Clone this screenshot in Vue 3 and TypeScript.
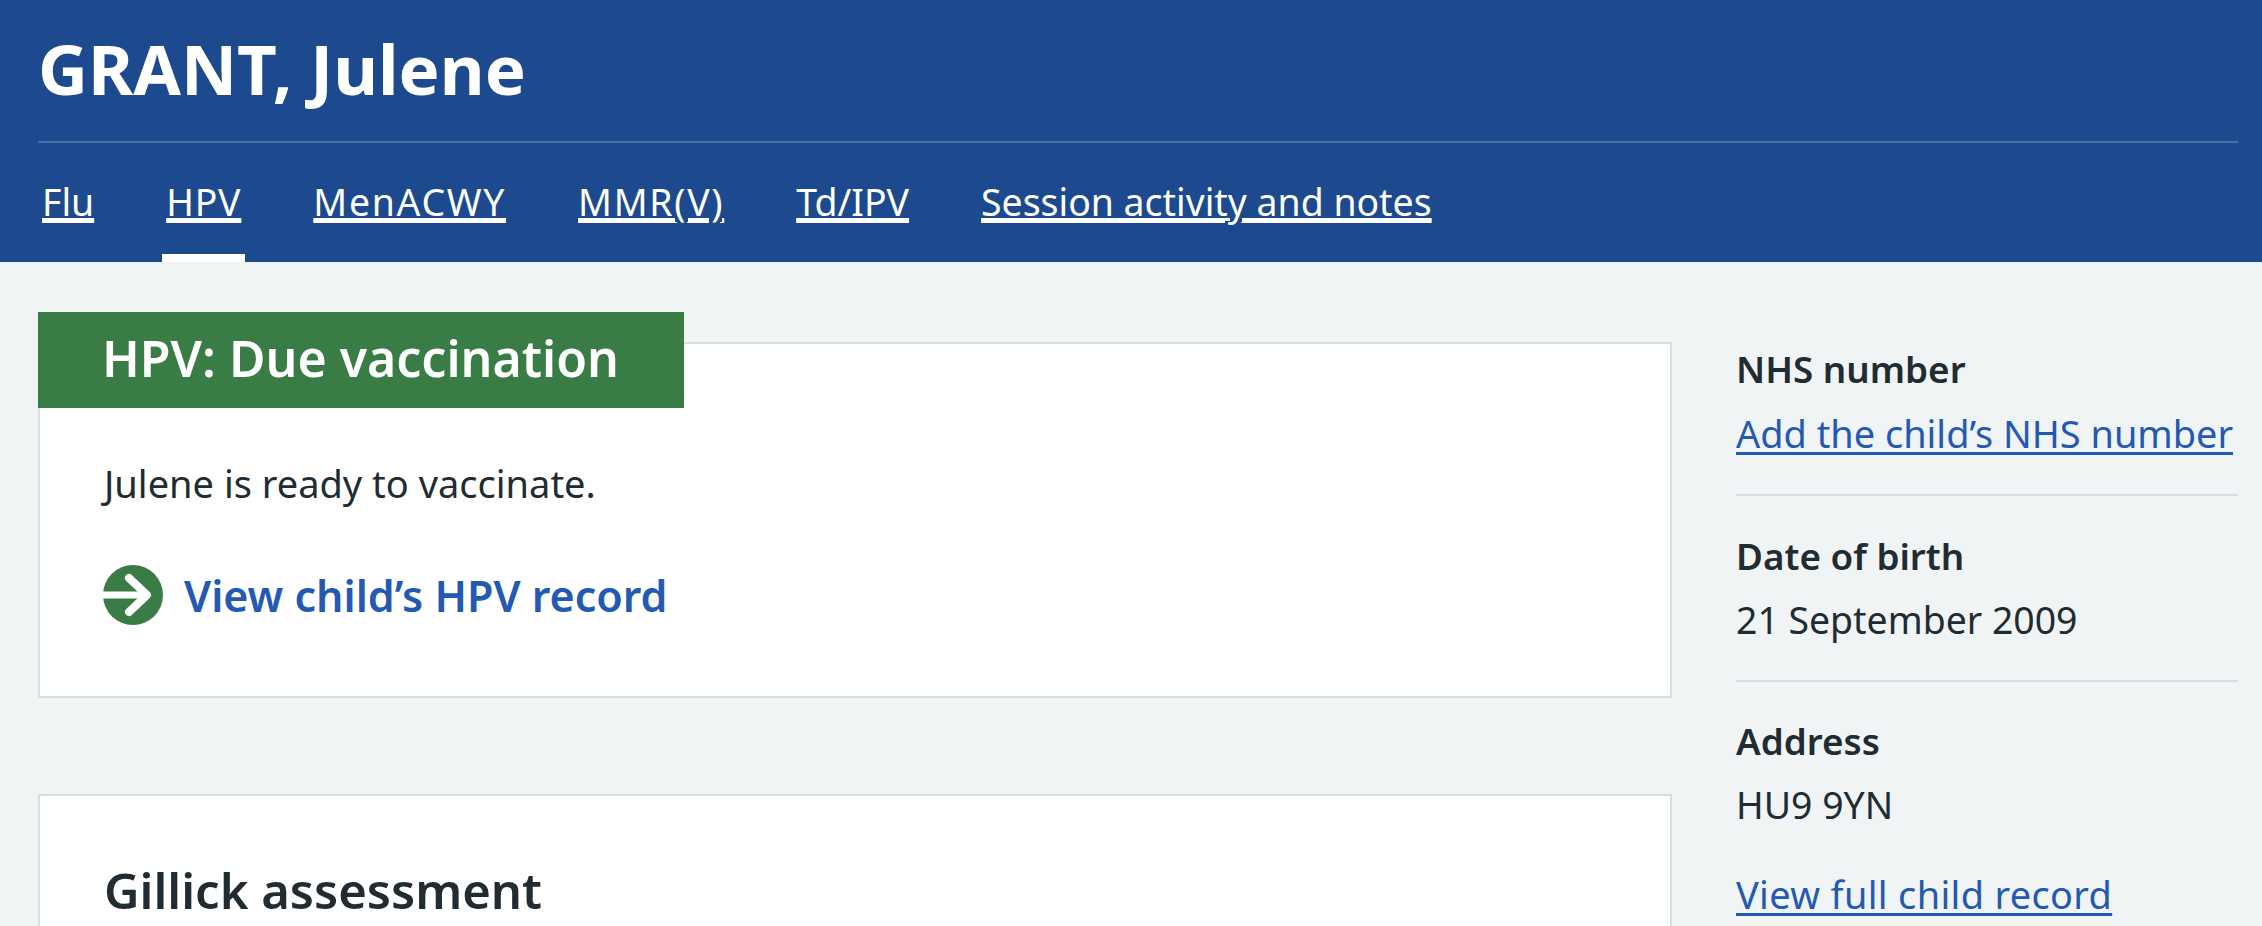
<script setup lang="ts">
const tabs = [
  { label: 'Flu', active: false, wide: false },
  { label: 'HPV', active: true, wide: false },
  { label: 'MenACWY', active: false, wide: true },
  { label: 'MMR(V)', active: false, wide: true },
  { label: 'Td/IPV', active: false, wide: false },
  { label: 'Session activity and notes', active: false, wide: false },
]
</script>

<template>
  <div class="page">
    <header class="banner">
      <h1 class="title">GRANT, Julene</h1>
      <nav class="tabs">
        <a v-for="t in tabs" :key="t.label" href="#" class="tab" :class="{ active: t.active, wide: t.wide }">
          <span class="tab-label">{{ t.label }}</span>
        </a>
      </nav>
    </header>
    <div class="content">
      <main class="col">
        <section class="card">
          <h2 class="card-head">HPV: Due vaccination</h2>
          <div class="card-body">
            <p class="text">Julene is ready to vaccinate.</p>
            <a href="#" class="action">
              <svg class="arrow" viewBox="0 0 60 60" aria-hidden="true">
                <circle cx="30" cy="30" r="30" fill="#397c45" />
                <path d="M0 30H42" stroke="#fff" stroke-width="7" fill="none" />
                <path d="M26 13L44 30 26 47" stroke="#fff" stroke-width="8" stroke-linecap="round" stroke-linejoin="round" fill="none" />
              </svg>
              <span>View child’s HPV record</span>
            </a>
          </div>
        </section>
        <section class="card second">
          <h2 class="sub">Gillick assessment</h2>
        </section>
      </main>
      <aside class="side">
        <div class="row">
          <div class="key">NHS number</div>
          <a href="#" class="link">Add the child’s NHS number</a>
        </div>
        <div class="row">
          <div class="key">Date of birth</div>
          <div class="val">21 September 2009</div>
        </div>
        <div class="row last">
          <div class="key">Address</div>
          <div class="val">HU9 9YN</div>
        </div>
        <a href="#" class="link full">View full child record</a>
      </aside>
    </div>
  </div>
</template>

<style>
html, body { margin: 0; background: #f0f4f5; overflow: hidden; }
</style>

<style scoped>
.page {
  height: 926px;
  overflow: hidden;
  background: #f0f4f5;
  color: #212b32;
  font-family: "Noto Sans", "Open Sans", sans-serif;
  font-size: 37.4px;
}
.banner {
  height: 262px;
  box-sizing: border-box;
  background: #1d4a8e;
  padding: 0 24px 0 38px;
  color: #fff;
}
.title {
  margin: 0;
  height: 141px;
  border-bottom: 2px solid #4a6fa8;
  font-size: 69px;
  font-weight: 700;
  line-height: 136px;
}
.tabs {
  display: flex;
  height: 119px;
  gap: 72px;
  padding-left: 4px;
}
.tab {
  position: relative;
  color: #fff;
  height: 100%;
  line-height: 117px;
}
.tab.active { letter-spacing: 0.8px; }
.tab.wide { letter-spacing: 1.7px; }
.tab-label {
  text-decoration: underline;
  text-decoration-thickness: 3px;
  text-underline-offset: 4px;
}
.tab.active::after {
  content: "";
  position: absolute;
  left: -4px;
  right: -4px;
  bottom: 0;
  height: 8px;
  background: #fff;
}
.content {
  display: grid;
  grid-template-columns: 1634px 502px;
  gap: 64px;
  padding: 80px 26px 0 38px;
}
.card {
  background: #fff;
  border: 2px solid #d8dde0;
  box-sizing: border-box;
  height: 356px;
}
.card.second {
  margin-top: 96px;
  height: 400px;
  padding: 64px 64px 0;
}
.card-head {
  margin: -32px 0 0 -2px;
  width: fit-content;
  height: 96px;
  box-sizing: border-box;
  padding: 0 65px 0 64px;
  background: #397c45;
  color: #fff;
  font-size: 50px;
  font-weight: 600;
  line-height: 93px;
}
.card-body { padding: 50px 64px 0; }
.text { margin: 0; font-size: 38px; line-height: 50px; }
.action {
  display: flex;
  align-items: center;
  gap: 21px;
  margin-top: 57px;
  color: #2359b3;
  font-size: 43px;
  font-weight: 600;
  text-decoration: none;
}
.arrow { width: 60px; height: 60px; flex: none; margin-left: -1px; }
.sub {
  margin: 0;
  font-size: 49px;
  font-weight: 600;
  line-height: 60px;
}
.side { padding-top: 2px; }
.row {
  border-bottom: 2px solid #d8dde0;
  padding-bottom: 35px;
  margin-bottom: 34.5px;
}
.row.last { border-bottom: 0; margin-bottom: 0; }
.key { font-size: 36.8px; font-weight: 600; line-height: 50px; margin-bottom: 14px; }
.val { line-height: 50px; }
.link {
  color: #2359b3;
  font-size: 37.9px;
  line-height: 50px;
  text-decoration: underline;
  text-decoration-thickness: 3px;
  text-underline-offset: 4px;
}
.full { display: inline-block; margin-top: 4px; letter-spacing: 0.35px; }
</style>
